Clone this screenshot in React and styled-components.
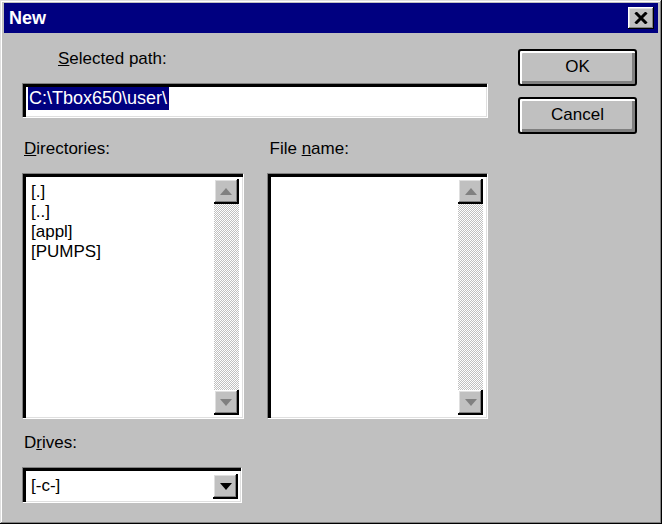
import React from "react"
import styled, { createGlobalStyle } from "styled-components"

const GlobalStyle = createGlobalStyle`
  body {
    margin: 0;
    background: #fff;
    font-family: "Liberation Sans", Arial, sans-serif;
  }
`

//window frame
const Window = styled.div`
  box-sizing: border-box;
  width: 662px;
  height: 524px;
  padding: 3px 4px;
  background: #c0c0c0;
  box-shadow: inset -1px -1px #000, inset 1px 1px #dfdfdf,
    inset -2px -2px #808080, inset 2px 2px #fff;
  display: flex;
  flex-direction: column;
`
const TitleBar = styled.div`
  height: 30px;
  background: #000080;
  display: flex;
  align-items: center;
  justify-content: space-between;
  padding: 0 4px 0 5px;
`
const Title = styled.span`
  color: #fff;
  font-weight: bold;
  font-size: 18px;
`
const CloseButton = styled.div`
  width: 26px;
  height: 22px;
  box-sizing: border-box;
  background: #c0c0c0;
  box-shadow: inset -1px -1px #000, inset 1px 1px #fff,
    inset -2px -2px #808080, inset 2px 2px #dfdfdf;
  display: flex;
  align-items: center;
  justify-content: center;
`

//dialog body
const Body = styled.div`
  flex: 1;
  display: flex;
  padding: 16px 0 0 18px;
`
const LeftColumn = styled.div`
  width: 466px;
  display: flex;
  flex-direction: column;
`
const RightColumn = styled.div`
  display: flex;
  flex-direction: column;
  gap: 11px;
  margin: 0 0 0 30px;
`
const Label = styled.div`
  font-size: 17px;
  line-height: 20px;
  height: 20px;
  color: #000;
  padding-left: ${(p) => p.$indent || 2}px;
  margin-top: ${(p) => p.$top || 0}px;
`
const Sunken = styled.div`
  box-sizing: border-box;
  background: #fff;
  border: 1px solid;
  border-color: #808080 #fff #fff #808080;
  box-shadow: inset 3px 3px #000, inset -1px -1px #dfdfdf;
  padding: 4px 2px 2px 4px;
`
const PathInput = styled(Sunken)`
  height: 35px;
  margin-top: 14px;
  padding: 3px 2px 2px 5px;
  display: flex;
  align-items: flex-start;
`
const Selection = styled.span`
  background: #000080;
  color: #fff;
  font-size: 18px;
  line-height: 23px;
  padding: 0 2px 0 1px;
`
const ListsRow = styled.div`
  display: flex;
  gap: 23px;
  margin-top: 21px;
`
const ListColumn = styled.div`
  display: flex;
  flex-direction: column;
  width: 222px;
`
const ListBox = styled(Sunken)`
  height: 246px;
  margin-top: 14px;
  display: flex;
  padding: 4px 4px 3px 4px;
`
const Items = styled.div`
  flex: 1;
  padding: 4px 0 0 4px;
  font-size: 17px;
  line-height: 20px;
`
const ScrollBar = styled.div`
  width: 25px;
  display: flex;
  flex-direction: column;
  margin-top: 1px;
`
const Track = styled.div`
  flex: 1;
  background: repeating-conic-gradient(#c0c0c0 0 25%, #fff 0 50%) 0 0 / 2px 2px;
`
const ArrowButton = styled.div`
  width: 25px;
  height: 25px;
  box-sizing: border-box;
  background: #c0c0c0;
  box-shadow: inset -2px -2px #000, inset 1px 1px #fff,
    inset -3px -3px #808080, inset 2px 2px #dfdfdf;
  display: flex;
  align-items: center;
  justify-content: center;
  flex-shrink: 0;
`
const Combo = styled(Sunken)`
  width: 220px;
  height: 36px;
  margin-top: 14px;
  display: flex;
  align-items: center;
  padding: 4px 3px 2px 8px;
`
const ComboText = styled.span`
  flex: 1;
  font-size: 17px;
`
const PushButton = styled.div`
  width: 119px;
  height: 37px;
  box-sizing: border-box;
  border: 2px solid #000;
  border-radius: 3px;
  background: #c0c0c0;
  box-shadow: inset 2px 2px #fff, inset -3px -3px #808080;
  display: flex;
  align-items: center;
  justify-content: center;
  font-size: 17px;
  padding-bottom: 1px;
`

const Arrow = ({ down, color }) => (
  <svg width="12" height="7" viewBox="0 0 12 7">
    <polygon
      points={down ? "0,0 12,0 6,7" : "0,7 12,7 6,0"}
      fill={color}
    />
  </svg>
)

const ScrollList = ({ items }) => (
  <ListBox>
    <Items>
      {items.map((i) => (
        <div key={i}>{i}</div>
      ))}
    </Items>
    <ScrollBar>
      <ArrowButton>
        <Arrow color="#808080" />
      </ArrowButton>
      <Track />
      <ArrowButton>
        <Arrow down color="#808080" />
      </ArrowButton>
    </ScrollBar>
  </ListBox>
)

const App = () => (
  <>
    <GlobalStyle />
    <Window>
      <TitleBar>
        <Title>New</Title>
        <CloseButton>
          <svg width="14" height="12" viewBox="0 0 14 12">
            <path d="M1.5 0.5 L12.5 11.5 M12.5 0.5 L1.5 11.5" stroke="#000" strokeWidth="3" />
          </svg>
        </CloseButton>
      </TitleBar>
      <Body>
        <LeftColumn>
          <Label $indent={36}>
            <u>S</u>elected path:
          </Label>
          <PathInput>
            <Selection>C:\Tbox650\user\</Selection>
          </PathInput>
          <ListsRow>
            <ListColumn>
              <Label>
                <u>D</u>irectories:
              </Label>
              <ScrollList items={["[.]", "[..]", "[appl]", "[PUMPS]"]} />
            </ListColumn>
            <ListColumn>
              <Label $indent={3}>
                File <u>n</u>ame:
              </Label>
              <ScrollList items={[]} />
            </ListColumn>
          </ListsRow>
          <Label $top={14}>
            D<u>r</u>ives:
          </Label>
          <Combo>
            <ComboText>[-c-]</ComboText>
            <ArrowButton>
              <Arrow down color="#000" />
            </ArrowButton>
          </Combo>
        </LeftColumn>
        <RightColumn>
          <PushButton>OK</PushButton>
          <PushButton>Cancel</PushButton>
        </RightColumn>
      </Body>
    </Window>
  </>
)

export default App
